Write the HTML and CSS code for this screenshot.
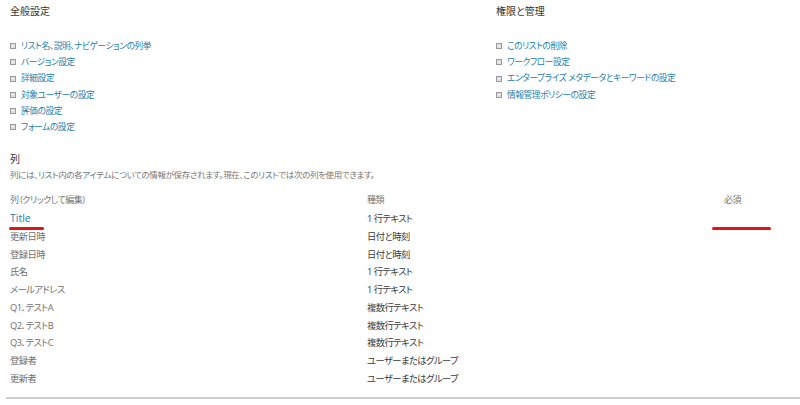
FILE: index.html
```html
<!DOCTYPE html>
<html lang="ja">
<head>
    <meta charset="UTF-8">
    <title>リストの設定</title>
    <link rel="stylesheet" href="styles.css">
</head>
<body>
    <div class="settings">
        <div class="group">
            <h3>全般設定</h3>
            <ul class="links">
                <li><a href="#">リスト名、説明、ナビゲーションの列挙</a></li>
                <li><a href="#">バージョン設定</a></li>
                <li><a href="#">詳細設定</a></li>
                <li><a href="#">対象ユーザーの設定</a></li>
                <li><a href="#">評価の設定</a></li>
                <li><a href="#">フォームの設定</a></li>
            </ul>
        </div>
        <div class="group">
            <h3>権限と管理</h3>
            <ul class="links">
                <li><a href="#">このリストの削除</a></li>
                <li><a href="#">ワークフロー設定</a></li>
                <li><a href="#">エンタープライズ メタデータとキーワードの設定</a></li>
                <li><a href="#">情報管理ポリシーの設定</a></li>
            </ul>
        </div>
    </div>

    <div class="columns">
        <h3>列</h3>
        <p class="desc">列には、リスト内の各アイテムについての情報が保存されます。現在、このリストでは次の列を使用できます。</p>
        <table class="cols">
            <tr class="head">
                <td class="c-name">列 (クリックして編集)</td>
                <td class="c-type">種類</td>
                <td class="c-req">必須</td>
            </tr>
            <tr><td class="c-name"><a href="#" class="title-link">Title</a></td><td class="c-type">1 行テキスト</td><td></td></tr>
            <tr><td class="c-name">更新日時</td><td class="c-type">日付と時刻</td><td></td></tr>
            <tr><td class="c-name">登録日時</td><td class="c-type">日付と時刻</td><td></td></tr>
            <tr><td class="c-name">氏名</td><td class="c-type">1 行テキスト</td><td></td></tr>
            <tr><td class="c-name">メールアドレス</td><td class="c-type">1 行テキスト</td><td></td></tr>
            <tr><td class="c-name">Q1．テストA</td><td class="c-type">複数行テキスト</td><td></td></tr>
            <tr><td class="c-name">Q2．テストB</td><td class="c-type">複数行テキスト</td><td></td></tr>
            <tr><td class="c-name">Q3．テストC</td><td class="c-type">複数行テキスト</td><td></td></tr>
            <tr><td class="c-name">登録者</td><td class="c-type">ユーザーまたはグループ</td><td></td></tr>
            <tr><td class="c-name">更新者</td><td class="c-type">ユーザーまたはグループ</td><td></td></tr>
        </table>
        <div class="mark mark-title"></div>
        <div class="mark mark-req"></div>
    </div>
    <div class="rule"></div>
</body>
</html>
```

FILE: styles.css
```css
* { box-sizing: border-box; }
body {
    margin: 0;
    background: #fff;
    font-family: "Segoe UI", "Open Sans", "Noto Sans CJK JP", sans-serif;
    font-feature-settings: "palt";
    color: #444;
    width: 800px;
    height: 405px;
    overflow: hidden;
}
h3 {
    margin: 0;
    font-weight: normal;
    color: #333;
}
a {
    color: #1f7ea8;
    text-decoration: none;
}
.settings {
    display: flex;
    padding: 3px 0 0 10px;
}
.group {
    width: 486px;
}
.group + .group {
    width: auto;
}
.group h3 {
    font-size: 10px;
    line-height: 16px;
    height: 35px;
}
.links {
    list-style: none;
    margin: 0;
    padding: 0;
}
.links li {
    font-size: 8.7px;
    line-height: 16.2px;
    display: flex;
    align-items: center;
    letter-spacing: -0.4px;
}
.links li::before {
    content: '';
    width: 4px;
    height: 4px;
    border: 1px solid #999;
    background: #e4e4e4;
    margin: 0 5px 0 0;
}
.columns {
    position: relative;
    padding: 16px 10px 0 10px;
}
.columns h3 {
    font-size: 10px;
    line-height: 16px;
}
.desc {
    margin: 1px 0 8px;
    font-size: 8.5px;
    line-height: 14px;
    color: #777;
    letter-spacing: -0.35px;
}
.cols {
    border-collapse: collapse;
    width: 780px;
    font-size: 9.3px;
    letter-spacing: -0.55px;
}
.cols td {
    padding: 0;
    height: 17.75px;
    line-height: 17.75px;
    white-space: nowrap;
}
.cols .head td {
    color: #777;
    font-size: 9px;
    height: 20px;
}
.c-name {
    width: 357px;
    color: #6f6f6f;
}
.c-type {
    width: 357px;
    color: #3a3a3a;
}
.c-req {
    color: #888;
}
.title-link {
    font-size: 10.5px;
    letter-spacing: 0;
}
.mark {
    position: absolute;
    height: 3px;
    background: #e0141a;
    border-radius: 2px;
}
.mark-title {
    left: 9px;
    top: 92px;
    width: 35px;
}
.mark-req {
    left: 712px;
    top: 92px;
    width: 59px;
}
.rule {
    margin: 0 0 0 6px;
    height: 2px;
    background: #ccc;
    position: relative;
    top: 9px;
}
```
